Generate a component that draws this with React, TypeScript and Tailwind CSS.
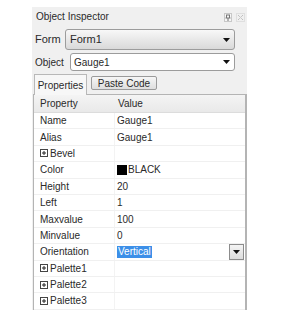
import React from "react";

const rows: { name: string; value?: string; plus?: boolean; color?: boolean; select?: boolean }[] = [
  { name: "Name", value: "Gauge1" },
  { name: "Alias", value: "Gauge1" },
  { name: "Bevel", plus: true },
  { name: "Color", value: "BLACK", color: true },
  { name: "Height", value: "20" },
  { name: "Left", value: "1" },
  { name: "Maxvalue", value: "100" },
  { name: "Minvalue", value: "0" },
  { name: "Orientation", value: "Vertical", select: true },
  { name: "Palette1", plus: true },
  { name: "Palette2", plus: true },
  { name: "Palette3", plus: true },
];

function Arrow() {
  return (
    <svg width="7" height="4" viewBox="0 0 7 4">
      <path d="M0 0 H7 L3.5 4 Z" fill="#111" />
    </svg>
  );
}

function PlusBox() {
  return (
    <svg width="8" height="8" viewBox="0 0 8 8" className="shrink-0">
      <rect x="0.5" y="0.5" width="7" height="7" fill="#fff" stroke="#444" />
      <path d="M2 4 H6 M4 2 V6" stroke="#222" strokeWidth="1" />
    </svg>
  );
}

export default function App() {
  return (
    <div
      className="w-[291px] h-[321px] bg-white pt-[7px] pl-[32px] text-[#2a2a2a]"
      style={{ fontFamily: '"Liberation Sans", Arial, sans-serif' }}
    >
      <div className="w-[215px] bg-[#f0f0f0] flex flex-col">
        {/* title */}
        <div className="h-[17px] flex items-center pl-[4px] pr-[2px] text-[10px]">
          <span className="flex-1 mt-[1px]">Object Inspector</span>
          <div className="flex items-center gap-[4px] mt-[4px]">
            <svg width="8" height="9" viewBox="0 0 8 9">
              <rect x="0.5" y="0.5" width="7" height="8" fill="#f6f6f6" stroke="#c8c8c8" />
              <path d="M2 2 H6 M2.5 2 V5 M5.5 2 V5 M1.5 5 H6.5 M4 5 V8" stroke="#777" strokeWidth="1" />
            </svg>
            <svg width="9" height="9" viewBox="0 0 9 9">
              <rect x="0.5" y="0.5" width="8" height="8" fill="none" stroke="#cfcfcf" strokeDasharray="1 1" />
              <path d="M2 2 L7 7 M7 2 L2 7" stroke="#aaa" strokeWidth="1" strokeDasharray="1 1" />
            </svg>
          </div>
        </div>
        {/* form row */}
        <div className="mt-[5px] h-[21px] flex items-center pl-[3px]">
          <span className="w-[30px] text-[11px]">Form</span>
          <div className="w-[170px] h-[21px] rounded-[3px] border border-[#9c9c9c] bg-gradient-to-b from-[#f8f8f8] to-[#d9d9d9] flex items-center pl-[4px] pr-[4px] text-[11px]">
            <span className="flex-1">Form1</span>
            <Arrow />
          </div>
        </div>
        {/* object row */}
        <div className="mt-[3px] h-[18px] flex items-center pl-[3px]">
          <span className="w-[35px] text-[10px]">Object</span>
          <div className="w-[165px] h-[18px] rounded-[3px] border border-[#9c9c9c] bg-white flex items-center pl-[3px] pr-[4px] text-[10px]">
            <span className="flex-1">Gauge1</span>
            <Arrow />
          </div>
        </div>
        {/* tabs */}
        <div className="mt-[3px] h-[20px] flex items-start pl-[2px] text-[10px]">
          <div className="w-[53px] h-[21px] border border-b-0 border-[#b8b8b8] bg-[#f7f7f7] flex items-center justify-center relative z-10">
            Properties
          </div>
          <div className="ml-[4px] mt-[2px] w-[66px] h-[14px] rounded-[2px] border border-[#9a9a9a] bg-gradient-to-b from-[#f6f6f6] to-[#dedede] flex items-center justify-center">
            Paste Code
          </div>
        </div>
        {/* grid */}
        <div className="ml-[1px] w-[214px] h-[216px] bg-white border-l border-r-2 border-t border-[#b4b4b4] text-[10px] flex flex-col">
          <div className="h-[18px] flex items-center bg-gradient-to-b from-[#f4f4f4] to-[#e9e9e9] border-b border-[#dcdcdc]">
            <span className="w-[81px] pl-[6px]">Property</span>
            <span className="pl-[3px]">Value</span>
          </div>
          {rows.map((r) => (
            <div key={r.name} className="h-[16.4px] flex items-center border-b border-[#f0f0f0]">
              <div className="w-[81px] h-full flex items-center pl-[6px] gap-[2px] border-r border-[#f3f3f3]">
                {r.plus && <PlusBox />}
                <span>{r.name}</span>
              </div>
              <div className="flex-1 h-full flex items-center pl-[2px]">
                {r.color && <span className="w-[10px] h-[10px] bg-black mr-[1px]" />}
                {r.select ? (
                  <>
                    <span className="bg-[#3c8fe8] text-white px-[1px] leading-[12px]">{r.value}</span>
                    <span className="flex-1" />
                    <div className="w-[15px] h-[16px] border border-[#8c8c8c] bg-gradient-to-b from-[#f4f4f4] to-[#dcdcdc] flex items-center justify-center mr-[1px]">
                      <Arrow />
                    </div>
                  </>
                ) : (
                  <span>{r.value}</span>
                )}
              </div>
            </div>
          ))}
        </div>
      </div>
    </div>
  );
}
